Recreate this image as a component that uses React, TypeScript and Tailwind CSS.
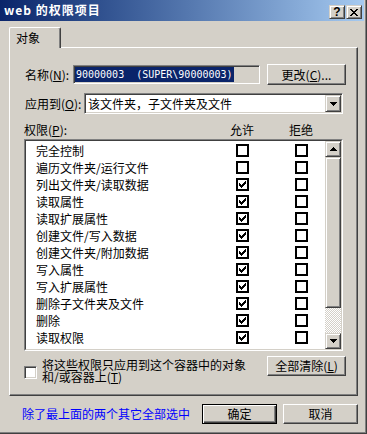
const raised =
  "border border-t-white border-l-white border-r-[#404040] border-b-[#404040] shadow-[inset_-1px_-1px_0_#808080] bg-[#d4d0c8]";
const raisedSb =
  "border border-t-[#d4d0c8] border-l-[#d4d0c8] border-r-[#404040] border-b-[#404040] shadow-[inset_1px_1px_0_#ffffff,inset_-1px_-1px_0_#808080] bg-[#d4d0c8]";
const sunken =
  "border border-t-[#808080] border-l-[#808080] border-r-white border-b-white shadow-[inset_1px_1px_0_#404040,inset_-1px_-1px_0_#d4d0c8] p-[1px]";

const perms: [string, boolean][] = [
  ["完全控制", false],
  ["遍历文件夹/运行文件", false],
  ["列出文件夹/读取数据", true],
  ["读取属性", true],
  ["读取扩展属性", true],
  ["创建文件/写入数据", true],
  ["创建文件夹/附加数据", true],
  ["写入属性", true],
  ["写入扩展属性", true],
  ["删除子文件夹及文件", true],
  ["删除", true],
  ["读取权限", true],
];

function Check() {
  // classic 7x7 tick, one 3px column per x
  return (
    <svg width="7" height="7" viewBox="0 0 7 7" shapeRendering="crispEdges">
      <path d="M0 2h1v3H0zM1 3h1v3H1zM2 4h1v3H2zM3 3h1v3H3zM4 2h1v3H4zM5 1h1v3H5zM6 0h1v3H6z" fill="#000" />
    </svg>
  );
}

function FlatBox({ on }: { on: boolean }) {
  return (
    <div className="w-[13px] h-[13px] border-2 border-black bg-white flex items-center justify-center shrink-0">
      {on && <Check />}
    </div>
  );
}

function Arrow({ up }: { up?: boolean }) {
  return (
    <svg width="7" height="4" viewBox="0 0 7 4" shapeRendering="crispEdges">
      {up ? (
        <path d="M3 0h1v1H3zM2 1h3v1H2zM1 2h5v1H1zM0 3h7v1H0z" fill="#000" />
      ) : (
        <path d="M0 0h7v1H0zM1 1h5v1H1zM2 2h3v1H2zM3 3h1v1H3z" fill="#000" />
      )}
    </svg>
  );
}

export default function App() {
  return (
    <div className="w-[367px] h-[434px] bg-[#d4d0c8] border-r border-b border-[#404040] font-['Noto_Sans_CJK_SC',sans-serif] text-[12px] leading-none text-black">
      <div className="h-full border-r border-b border-[#808080] pr-[1px]">
        {/* Title bar */}
        <div className="h-[21px] flex items-start bg-linear-to-r from-[#0a246a] to-[#a6caf0]">
          <div className="pl-[4px] pt-[4px] text-white font-bold tracking-[1px]">web 的权限项目</div>
          <div className="ml-auto flex gap-[1px] pt-[5px] pr-[2px]">
            <div className={`w-[16px] h-[14px] flex items-center justify-center ${raisedSb}`}>
              <span className="font-['Liberation_Sans',sans-serif] font-bold text-[12px] leading-none">?</span>
            </div>
            <div className={`w-[16px] h-[14px] flex items-center justify-center ${raisedSb}`}>
              <svg width="8" height="7" viewBox="0 0 8 7" shapeRendering="crispEdges">
                <path d="M0 0h2v1H0zM6 0h2v1H6zM1 1h2v1H1zM5 1h2v1H5zM2 2h4v1H2zM3 3h2v1H3zM2 4h4v1H2zM1 5h2v1H1zM5 5h2v1H5zM0 6h2v1H0zM6 6h2v1H6z" fill="#000" />
              </svg>
            </div>
          </div>
        </div>

        {/* Tab */}
        <div className="mt-[6px] pl-[9px] flex">
          <div className="relative z-10 -mb-[1px] w-[52px] h-[21px] bg-[#d4d0c8] border-t border-l border-white border-r border-r-[#404040] shadow-[inset_-1px_0_0_#808080] rounded-tl-[2px] rounded-tr-[2px] pl-[6px] pt-[4px]">
            对象
          </div>
        </div>

        {/* Panel */}
        <div className="ml-[9px] w-[349px] h-[349px] border border-t-white border-l-white border-r-[#404040] border-b-[#404040] shadow-[inset_-1px_-1px_0_#808080] pl-[14px] pt-[16px]">
          {/* Name */}
          <div className="flex items-center h-[21px]">
            <div className="w-[49px] pl-[1px]">
              名称(<u>N</u>):
            </div>
            <div className={`w-[187px] h-[19px] bg-[#d4d0c8] flex items-center ${sunken}`}>
              <span className="bg-[#0a246a] text-white h-[15px] flex items-center pl-[1px] pr-[1px] whitespace-pre font-['DejaVu_Sans_Mono',monospace] text-[10px]">
                90000003  (SUPER\90000003)
              </span>
            </div>
            <div className={`ml-[7px] w-[79px] h-[21px] flex items-center justify-center ${raised}`}>
              更改(<u>C</u>)...
            </div>
          </div>

          {/* Apply to */}
          <div className="flex items-center h-[21px] mt-[8px]">
            <div className="w-[60px] pl-[1px]">
              应用到(<u>O</u>):
            </div>
            <div className={`w-[259px] h-[21px] bg-white flex items-center ${sunken}`}>
              <span className="pl-[2px] flex-1">该文件夹，子文件夹及文件</span>
              <div className={`w-[16px] h-[17px] flex items-center justify-center ${raisedSb}`}>
                <Arrow />
              </div>
            </div>
          </div>

          {/* Header */}
          <div className="flex items-center h-[13px] mt-[9px]">
            <div className="w-[206px]">
              权限(<u>P</u>):
            </div>
            <div className="w-[24px]">允许</div>
            <div className="w-[35px]" />
            <div className="w-[24px]">拒绝</div>
          </div>

          {/* Permission list */}
          <div className="mt-[3px] w-[319px] h-[212px] border border-t-[#808080] border-l-[#808080] border-r-white border-b-white">
            <div className="h-full border border-t-[#404040] border-l-[#404040] border-r-[#d4d0c8] border-b-[#d4d0c8] bg-white flex">
              <div className="flex-1 pt-[1px]">
                {perms.map(([name, allow]) => (
                  <div key={name} className="h-[17px] flex items-center">
                    <div className="w-[210px] pl-[10px]">{name}</div>
                    <FlatBox on={allow} />
                    <div className="w-[46px]" />
                    <FlatBox on={false} />
                  </div>
                ))}
              </div>
              <div className="w-[16px] flex flex-col">
                <div className={`h-[16px] flex items-center justify-center ${raisedSb}`}>
                  <Arrow up />
                </div>
                <div className={`h-[151px] ${raisedSb}`} />
                <div className="flex-1 bg-[repeating-conic-gradient(#ffffff_0%_25%,#d4d0c8_0%_50%)] bg-[length:2px_2px]" />
                <div className={`h-[16px] flex items-center justify-center ${raisedSb}`}>
                  <Arrow />
                </div>
              </div>
            </div>
          </div>

          {/* Inherit option */}
          <div className="flex items-start mt-[5px]">
            <div className={`mt-[10px] w-[13px] h-[13px] bg-white shrink-0 ${sunken}`} />
            <div className="ml-[5px] mt-[3px] w-[220px] leading-[12px]">
              <div>将这些权限只应用到这个容器中的对象</div>
              <div>
                和/或容器上(<u>T</u>)
              </div>
            </div>
            <div className={`ml-[5px] w-[79px] h-[20px] flex items-center justify-center ${raised}`}>
              全部清除(<u>L</u>)
            </div>
          </div>
        </div>

        {/* Footer */}
        <div className="mt-[8px] flex items-center h-[20px]">
          <div className="pl-[22px] text-[#0000ff] w-[202px]">除了最上面的两个其它全部选中</div>
          <div className="w-[75px] h-[20px] flex items-center justify-center border border-black bg-[#d4d0c8] shadow-[inset_1px_1px_0_#ffffff,inset_-1px_-1px_0_#404040,inset_-2px_-2px_0_#808080]">
            确定
          </div>
          <div className={`ml-[6px] w-[75px] h-[20px] flex items-center justify-center ${raised}`}>取消</div>
        </div>
      </div>
    </div>
  );
}
